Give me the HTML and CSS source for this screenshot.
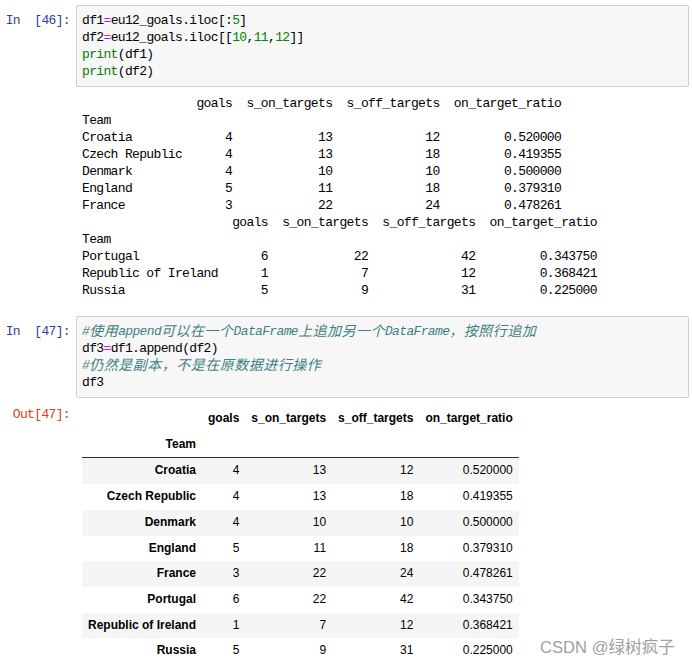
FILE: index.html
```html
<!DOCTYPE html>
<html>
<head>
<meta charset="utf-8">
<link rel="stylesheet" href="styles.css">
</head>
<body>
<div class="nb">
  <div class="row">
    <div class="prompt in mono">In  [46]:</div>
    <div class="input mono">
      <div class="ln">df1<span class="o">=</span>eu12_goals.iloc[:<span class="n">5</span>]</div>
      <div class="ln">df2<span class="o">=</span>eu12_goals.iloc[[<span class="n">10</span>,<span class="n">11</span>,<span class="n">12</span>]]</div>
      <div class="ln"><span class="b">print</span>(df1)</div>
      <div class="ln"><span class="b">print</span>(df2)</div>
    </div>
  </div>
  <pre class="stream mono">                goals  s_on_targets  s_off_targets  on_target_ratio
Team
Croatia             4            13             12         0.520000
Czech Republic      4            13             18         0.419355
Denmark             4            10             10         0.500000
England             5            11             18         0.379310
France              3            22             24         0.478261
                     goals  s_on_targets  s_off_targets  on_target_ratio
Team
Portugal                 6            22             42         0.343750
Republic of Ireland      1             7             12         0.368421
Russia                   5             9             31         0.225000</pre>
  <div class="row cell2">
    <div class="prompt in mono">In  [47]:</div>
    <div class="input mono">
      <div class="ln"><span class="c">#<span class="cjk">使用</span>append<span class="cjk">可以在一个</span>DataFrame<span class="cjk">上追加另一个</span>DataFrame<span class="cjk">，按照行追加</span></span></div>
      <div class="ln">df3<span class="o">=</span>df1.append(df2)</div>
      <div class="ln"><span class="c">#<span class="cjk">仍然是副本，不是在原数据进行操作</span></span></div>
      <div class="ln">df3</div>
    </div>
  </div>
  <div class="row out2">
    <div class="prompt out mono">Out[47]:</div>
    <div class="result">
      <table class="df">
        <thead>
          <tr><th></th><th>goals</th><th>s_on_targets</th><th>s_off_targets</th><th>on_target_ratio</th></tr>
          <tr><th>Team</th><th></th><th></th><th></th><th></th></tr>
        </thead>
        <tbody>
          <tr><th>Croatia</th><td>4</td><td>13</td><td>12</td><td>0.520000</td></tr>
          <tr><th>Czech Republic</th><td>4</td><td>13</td><td>18</td><td>0.419355</td></tr>
          <tr><th>Denmark</th><td>4</td><td>10</td><td>10</td><td>0.500000</td></tr>
          <tr><th>England</th><td>5</td><td>11</td><td>18</td><td>0.379310</td></tr>
          <tr><th>France</th><td>3</td><td>22</td><td>24</td><td>0.478261</td></tr>
          <tr><th>Portugal</th><td>6</td><td>22</td><td>42</td><td>0.343750</td></tr>
          <tr><th>Republic of Ireland</th><td>1</td><td>7</td><td>12</td><td>0.368421</td></tr>
          <tr><th>Russia</th><td>5</td><td>9</td><td>31</td><td>0.225000</td></tr>
        </tbody>
      </table>
    </div>
  </div>
</div>
<div class="watermark">CSDN @绿树疯子</div>
</body>
</html>
```
FILE: styles.css
```css
* { box-sizing: border-box; }
body {
  margin: 0;
  background: #fff;
  position: relative;
  width: 692px;
  height: 669px;
  overflow: hidden;
  color: #000;
}
.nb { padding: 5px 3px 0 0; }
.mono {
  font-family: "Liberation Mono", "Noto Sans CJK SC", monospace;
  font-size: 13px;
  letter-spacing: -0.65px;
  line-height: 17px;
}
pre { margin: 0; white-space: pre; }
.row { display: flex; align-items: flex-start; }
.prompt {
  width: 76px;
  flex: none;
  text-align: right;
  padding-right: 6px;
  white-space: pre;
}
.prompt.in { color: #303F9F; padding-top: 7px; }
.prompt.out { color: #D84315; }
.input {
  flex: 1;
  border: 1px solid #cfcfcf;
  border-radius: 2px;
  background: #f7f7f7;
  padding: 6px 5px;
}
.ln {
  height: 17px;
  white-space: pre;
  overflow: visible;
}
.o { color: #AA22FF; }
.n { color: #008800; }
.b { color: #008000; }
.c { color: #408080; font-style: italic; }
.cjk {
  font-family: "Noto Sans CJK SC", sans-serif;
  font-size: 14px;
  letter-spacing: 0.5px;
  line-height: 1px;
  vertical-align: -1px;
}
.stream { margin: 8px 0 0 82px; color: #000; }
.cell2 { margin-top: 17px; }
.out2 { margin-top: 8px; }
.result { padding-left: 6px; }
.df {
  border-collapse: collapse;
  border-spacing: 0;
  font-family: "Liberation Sans", Arial, sans-serif;
  font-size: 12px;
  color: #000;
}
.df th, .df td {
  text-align: right;
  vertical-align: middle;
  padding: 6px;
  line-height: 13.7px;
  border: none;
  white-space: nowrap;
}
.df th { font-weight: bold; }
.df thead { border-bottom: 1px solid #333; }
.df tbody tr:nth-child(odd) { background: #f5f5f5; }
.watermark {
  position: absolute;
  left: 540px;
  top: 639px;
  font-family: "Liberation Sans", "Noto Sans CJK SC", sans-serif;
  font-size: 16.6px;
  line-height: 18px;
  color: #a0a0a0;
  white-space: nowrap;
}
```
